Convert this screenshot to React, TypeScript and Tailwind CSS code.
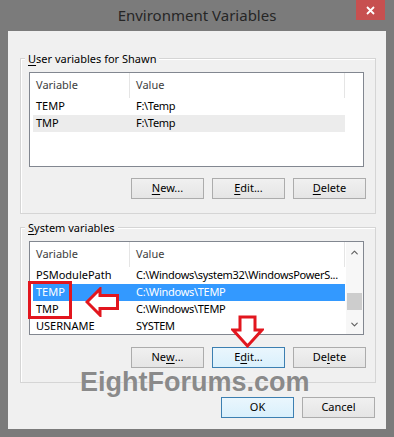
import { ChevronUp, ChevronDown } from 'lucide-react';

type Row = { name: string; value: string; selected?: boolean; hover?: boolean };

const userRows: Row[] = [
  { name: 'TEMP', value: 'F:\\Temp' },
  { name: 'TMP', value: 'F:\\Temp', hover: true },
];

const systemRows: Row[] = [
  { name: 'PSModulePath', value: 'C:\\Windows\\system32\\WindowsPowerS...' },
  { name: 'TEMP', value: 'C:\\Windows\\TEMP', selected: true },
  { name: 'TMP', value: 'C:\\Windows\\TEMP' },
  { name: 'USERNAME', value: 'SYSTEM' },
];

function Btn({ label, u, focus }: { label: string; u?: number; focus?: boolean }) {
  const before = u === undefined ? label : label.slice(0, u);
  const ch = u === undefined ? '' : label[u];
  const after = u === undefined ? '' : label.slice(u + 1);
  return (
    <button
      className={
        'flex h-[21px] w-[73px] items-center justify-center border text-[11px] text-black ' +
        (focus
          ? 'border-[#3c7fb1] bg-gradient-to-b from-[#eaf6fd] to-[#d9f0fc]'
          : 'border-[#acacac] bg-gradient-to-b from-[#f0f0f0] to-[#e5e5e5]')
      }
    >
      {before}
      {ch && <span className="underline underline-offset-2">{ch}</span>}
      {after}
    </button>
  );
}

function Header({ scroll }: { scroll?: boolean }) {
  return (
    <div className="flex h-[25px] text-[11px] text-[#3d3d3d]">
      <div className="flex w-[100px] items-center border-r border-[#e5e5e5] pl-[6px]">Variable</div>
      <div className="flex w-[215px] items-center border-r border-[#e5e5e5] pl-[6px]">Value</div>
      {!scroll && <div className="flex-1" />}
    </div>
  );
}

function Rows({ rows }: { rows: Row[] }) {
  return (
    <div className="pl-[3px]">
      {rows.map((r) => (
        <div
          key={r.name}
          className={
            'grid h-[17px] w-[312px] grid-cols-[100px_1fr] items-center text-[11px] ' +
            (r.selected ? 'bg-[#3399ff] text-white' : r.hover ? 'bg-[#ececec] text-black' : 'text-black')
          }
        >
          <div className="pl-[3px]">{r.name}</div>
          <div className="whitespace-nowrap pl-[3px] tracking-[-0.3px]">{r.value}</div>
        </div>
      ))}
    </div>
  );
}

function GroupLabel({ text, u }: { text: string; u: number }) {
  return (
    <div className="-ml-[4px] -mt-[8px] h-[16px] w-fit bg-[#f0f0f0] px-[3px] text-[11px] leading-[16px] text-black">
      {text.slice(0, u)}
      <span className="underline underline-offset-2">{text[u]}</span>
      {text.slice(u + 1)}
    </div>
  );
}

export default function App() {
  return (
    <div className="relative h-[437px] w-[394px] overflow-hidden bg-[#7b7b7b] font-['Noto_Sans',sans-serif]">
      {/* title bar */}
      <div className="grid h-[31px] grid-cols-[1fr_auto_1fr]">
        <div />
        <div className="pt-[4px] text-[15px] text-[#262626]">Environment Variables</div>
        <div className="flex justify-end pr-[9px]">
          <div className="flex h-[20px] w-[29px] items-center justify-center bg-[#c75050]">
            <svg width="9" height="9" viewBox="0 0 9 9">
              <path d="M1 1 L8 8 M8 1 L1 8" stroke="#fff" strokeWidth="1.8" />
            </svg>
          </div>
        </div>
      </div>

      {/* client */}
      <div className="mx-[8px] flex h-[398px] flex-col bg-[#f0f0f0] pl-[12px] pr-[10px] pt-[27px]">
        {/* user variables */}
        <div className="border border-[#d5d5d5] px-[8px] pb-[14px] shadow-[inset_1px_1px_0_#fff]">
          <GroupLabel text="User variables for Shawn" u={0} />
          <div className="mt-[5px] h-[95px] w-[335px] border border-[#828790] bg-white">
            <Header />
            <Rows rows={userRows} />
          </div>
          <div className="mt-[11px] flex justify-end gap-[8px] pr-[1px]">
            <Btn label="New..." u={0} />
            <Btn label="Edit..." u={0} />
            <Btn label="Delete" u={0} />
          </div>
        </div>

        {/* system variables */}
        <div className="mt-[13px] border border-[#d5d5d5] px-[8px] pb-[14px] shadow-[inset_1px_1px_0_#fff]">
          <GroupLabel text="System variables" u={0} />
          <div className="mt-[5px] flex h-[94px] w-[335px] overflow-hidden border border-[#828790] bg-white">
            <div className="flex-1 overflow-hidden">
              <Header scroll />
              <Rows rows={systemRows} />
            </div>
            <div className="flex w-[17px] flex-col items-center bg-[#f7f7f7]">
              <div className="flex h-[17px] items-center justify-center pt-[4px] text-[#606060]">
                <ChevronUp size={11} strokeWidth={2.5} />
              </div>
              <div className="mt-[34px] h-[17px] w-[15px] bg-[#cdcdcd]" />
              <div className="mt-auto flex h-[17px] items-center justify-center pb-[2px] text-[#606060]">
                <ChevronDown size={11} strokeWidth={2.5} />
              </div>
            </div>
          </div>
          <div className="mt-[12px] flex justify-end gap-[8px] pr-[1px]">
            <Btn label="New..." u={2} />
            <Btn label="Edit..." u={1} focus />
            <Btn label="Delete" u={2} />
          </div>
        </div>

        <div className="mt-[14px] flex justify-end gap-[8px] pr-[1px]">
          <Btn label="OK" focus />
          <Btn label="Cancel" />
        </div>
      </div>

      {/* annotations */}
      <div className="absolute left-[28px] top-[281px] h-[38px] w-[44px] border-[3px] border-[#e2161e]" />
      <svg className="absolute left-[85px] top-[287px]" width="35" height="30" viewBox="0 0 35 30">
        <path d="M2 15 L15 2 L15 8.5 L32.5 8.5 L32.5 21.5 L15 21.5 L15 28 Z" fill="#fff" stroke="#e2161e" strokeWidth="3" strokeLinejoin="miter" />
      </svg>
      <svg className="absolute left-[231px] top-[315px]" width="33" height="33" viewBox="0 0 33 33">
        <path d="M9 2 L24 2 L24 15 L31 15 L16.5 31 L2 15 L9 15 Z" fill="#fff" stroke="#e2161e" strokeWidth="3" strokeLinejoin="miter" />
      </svg>

      {/* watermark */}
      <div className="absolute left-[80px] top-[367px] font-['Liberation_Sans',sans-serif] text-[27px] font-bold leading-[30px] text-[#8a8a8a] [text-shadow:0_0_2px_#f4f4f4]">
        EightForums.com
      </div>
    </div>
  );
}
